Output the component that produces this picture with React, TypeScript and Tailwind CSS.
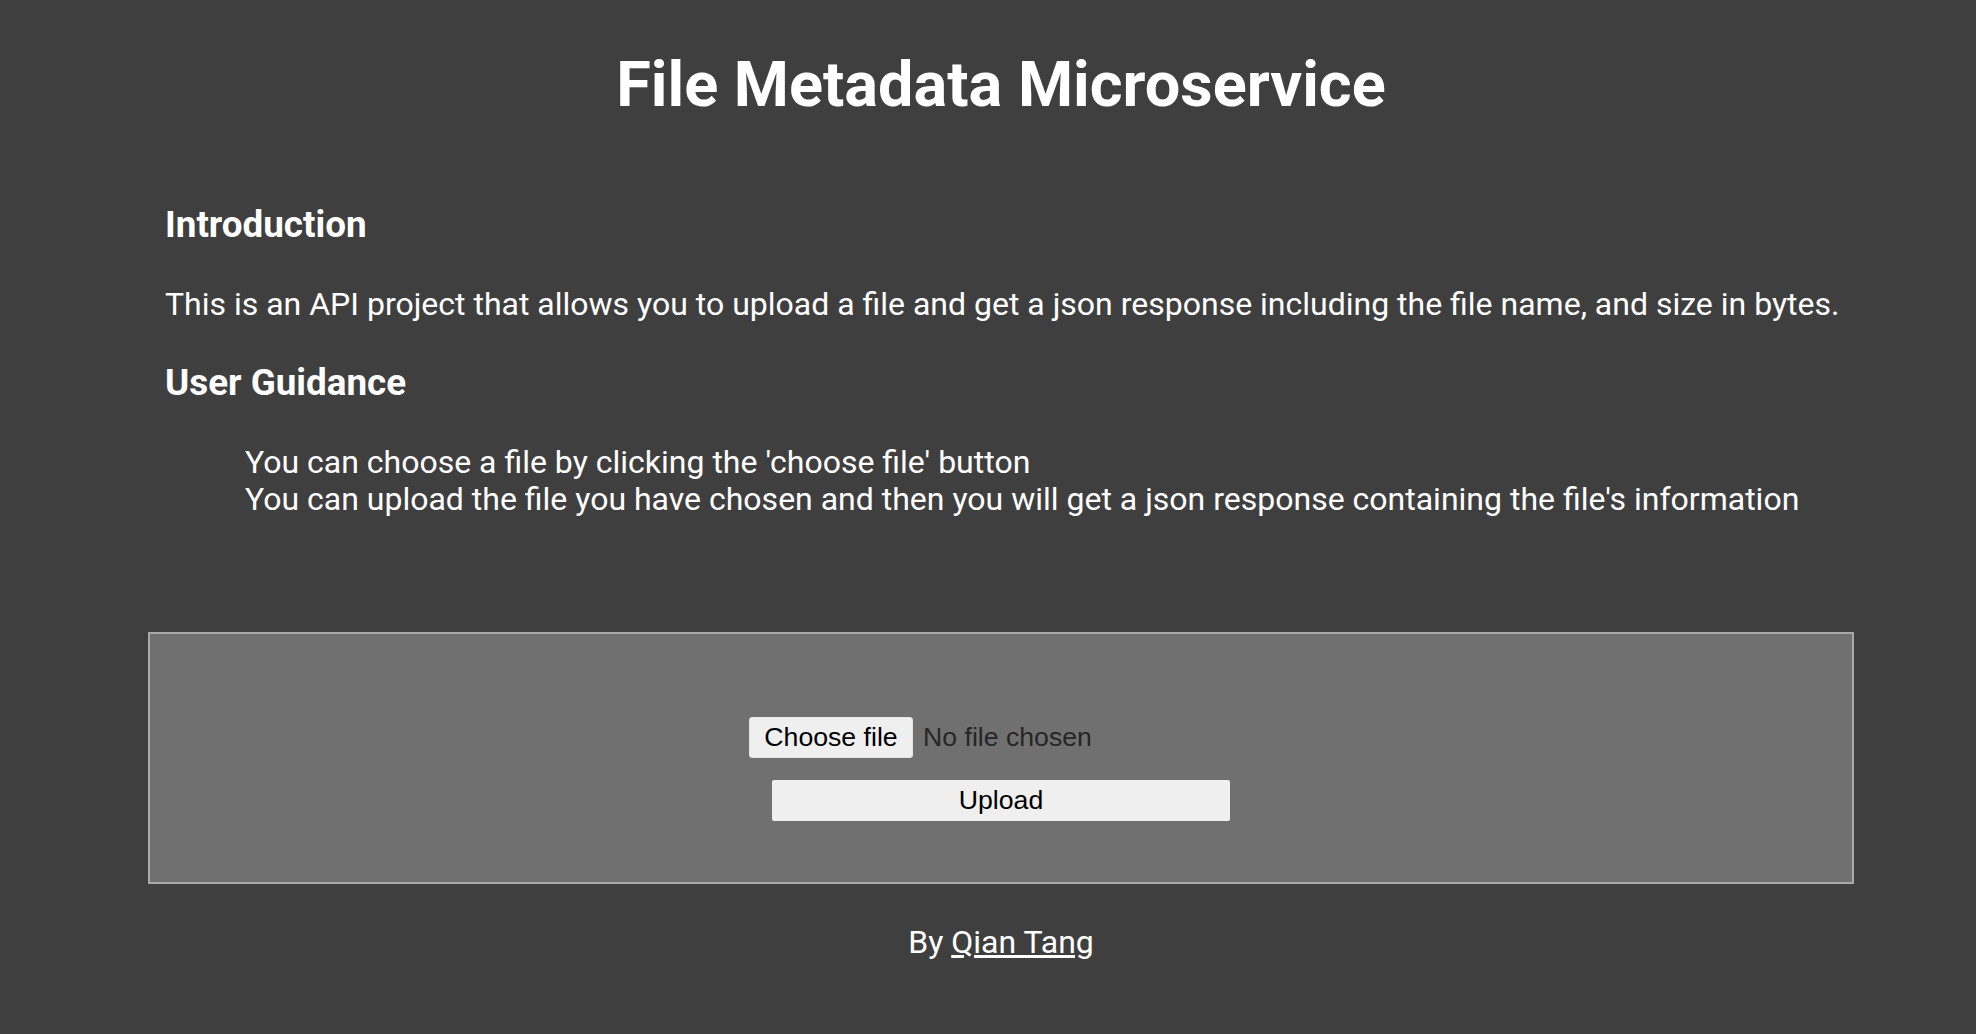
export default function App() {
  return (
    <div className="min-h-screen w-full bg-[#3f3f3f] text-white font-['Roboto',sans-serif] overflow-hidden">
      <div className="ml-[148px] w-[1706px] flex flex-col">
        {/* Header */}
        <h1 className="mt-[47px] text-center text-[63px] leading-[75px] font-bold">
          File Metadata Microservice
        </h1>

        {/* Intro */}
        <div className="pl-[17px] flex flex-col">
          <h3 className="mt-[81px] text-[36.8px] leading-[44px] font-bold">Introduction</h3>
          <p className="mt-[39px] text-[32px] leading-[37.5px] whitespace-nowrap">
            This is an API project that allows you to upload a file and get a json response including the file name, and size in bytes.
          </p>
          <h3 className="mt-[37px] text-[36.8px] leading-[44px] font-bold">User Guidance</h3>
          <ul className="mt-[39px] pl-[80px] text-[32px] leading-[37.5px]">
            <li>You can choose a file by clicking the 'choose file' button</li>
            <li>You can upload the file you have chosen and then you will get a json response containing the file's information</li>
          </ul>
        </div>

        {/* Upload form */}
        <form
          className="mt-[113px] h-[252px] border-2 border-[#a9a9a9] bg-[#707070] flex flex-col items-center pt-[83px] font-['Liberation_Sans',Arial,sans-serif]"
          onSubmit={(e) => e.preventDefault()}
        >
          <div className="w-[504px] h-[41px] flex items-center">
            <button
              type="button"
              className="h-[41px] w-[164px] shrink-0 rounded-[3px] bg-[#efefef] border border-[#e6e6e6] text-black text-[26.67px] leading-none flex items-center justify-center"
            >
              Choose file
            </button>
            <span className="ml-[10px] text-[26.67px] text-[#262626] whitespace-nowrap">No file chosen</span>
          </div>
          <button
            type="submit"
            className="mt-[22px] h-[41px] w-[458px] rounded-[2px] bg-[#efefef] text-black text-[26.67px] leading-none flex items-center justify-center"
          >
            Upload
          </button>
        </form>

        {/* Footer */}
        <p className="mt-[40px] text-center text-[32px] leading-[37.5px]">
          By <a href="#" className="underline">Qian Tang</a>
        </p>
      </div>
    </div>
  );
}
